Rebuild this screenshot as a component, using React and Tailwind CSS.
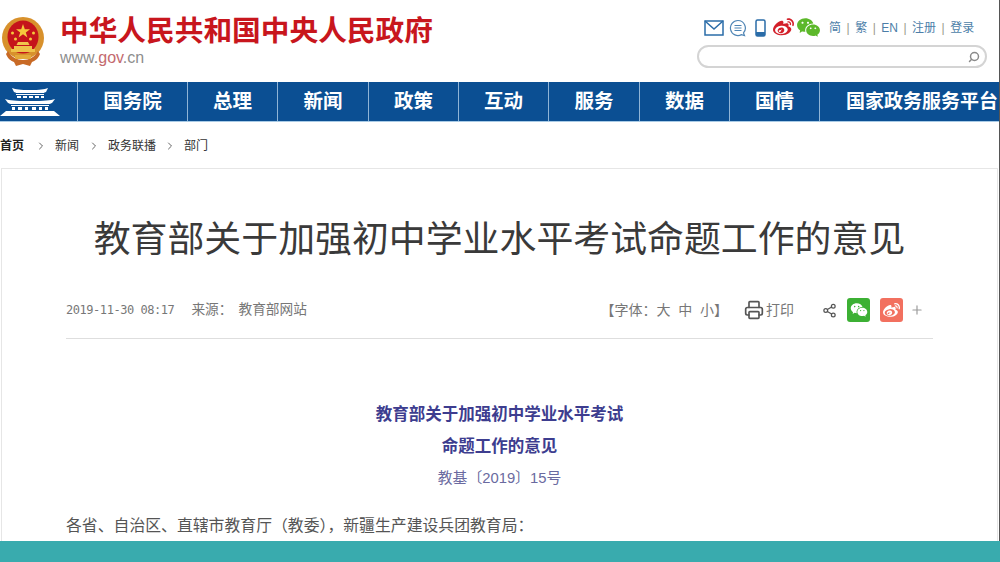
import React from "react";
import { ChevronRight, Plus, Printer, Share2, Search } from "lucide-react";
import { FaWeibo } from "react-icons/fa";
import { RiWechatFill } from "react-icons/ri";

const cjk = "font-['Liberation_Sans','Noto_Sans_CJK_SC',sans-serif]";

// 导航栏
const navItems = [
  { label: "国务院", w: "w-[110px]" },
  { label: "总理", w: "w-[90px]" },
  { label: "新闻", w: "w-[91px]" },
  { label: "政策", w: "w-[90px]" },
  { label: "互动", w: "w-[90px]" },
  { label: "服务", w: "w-[91px]" },
  { label: "数据", w: "w-[90px]" },
  { label: "国情", w: "w-[90px]" },
];

function Emblem() {
  return (
    <svg width="42" height="50" viewBox="0 0 42 50" className="shrink-0">
      <ellipse cx="21" cy="21" rx="21" ry="21" fill="#d8912c" />
      <path d="M6 34c3 6 9 9 15 9s12-3 15-9l2 3c-2 5-5 7-8 8l-2 4-7-2-7 2-2-4c-3-1-6-3-8-8z" fill="#c86a26" />
      <ellipse cx="21" cy="20" rx="15.500" ry="16.500" fill="#c5141b" />
      <polygon points="21,7 22.800,12.200 28,12.200 23.800,15.400 25.400,20.500 21,17.300 16.600,20.500 18.200,15.400 14,12.200 19.200,12.200" fill="#f5c93c" />
      <circle cx="10.500" cy="16" r="1.500" fill="#f5c93c" />
      <circle cx="13.500" cy="22" r="1.500" fill="#f5c93c" />
      <circle cx="28.500" cy="22" r="1.500" fill="#f5c93c" />
      <circle cx="31.500" cy="16" r="1.500" fill="#f5c93c" />
      <path d="M16 25h10l1.500 3H14.500z" fill="#f0c54c" />
      <path d="M12 29h18v3h3v3H9v-3h3z" fill="#efc24a" />
      <path d="M13 38h16v4H13z" fill="#e3a93a" />
    </svg>
  );
}

function Gate() {
  return (
    <svg width="60" height="28" viewBox="0 0 60 28" fill="#fff">
      <path d="M12 0c4 1.500 8 2 18 2s14-.500 18-2l-2 4c-2 1-3 1-4 1H18c-1 0-2 0-4-1z" />
      <path d="M16 6h28v1H16zM17 8h4v2h-4zM23 8h4v2h-4zM29 8h4v2h-4zM35 8h4v2h-4zM41 8h3v2h-3z" />
      <path d="M5 11c5 1.500 10 2 25 2s20-.500 25-2l-3 4c-1 .500-2 1-4 1H12c-2 0-3-.500-4-1z" />
      <path d="M11 17h38v1H11zM12 19h3v3h-3zM18 19h4v3h-4zM25 19h3v3h-3zM32 19h4v3h-4zM39 19h3v3h-3zM45 19h3v3h-3z" />
      <path d="M6 23h48l6 5H0z" />
    </svg>
  );
}

function Sep() {
  return <span className="mx-[5.500px] text-[#9a9a8c]">|</span>;
}

export default function App() {
  return (
    <div className={`h-[562px] w-[1000px] overflow-hidden bg-white flex flex-col ${cjk}`}>
      <div className="flex-1 min-h-0 flex flex-col border-r border-[#555]">
        {/* 顶部 */}
        <header className="h-[82px] flex justify-between">
          <div className="flex items-start pl-[2px] pt-[17px] gap-[16px]">
            <Emblem />
            <div className="-mt-[2px]">
              <h1 className="text-[28.700px] leading-[32px] font-bold text-[#c8161d] whitespace-nowrap">中华人民共和国中央人民政府</h1>
              <p className="text-[16px] leading-[18px] mt-[2px] text-[#8d8d8d]">
                www.<span className="text-[#c46a6e]">gov</span>.cn
              </p>
            </div>
          </div>
          <div className="w-[302px] pt-[17px]">
            <div className="flex items-center h-[21px] pl-[7px]">
              <svg width="20" height="16" viewBox="0 0 20 16" fill="none" stroke="#2a6ca8" strokeWidth="1.500">
                <rect x="1" y="1" width="18" height="14" />
                <path d="M1 1l9 8 9-8" />
              </svg>
              <svg width="18" height="18" viewBox="0 0 18 18" fill="none" stroke="#4f85b5" strokeWidth="1.200" className="ml-[5px]">
                <path d="M9 1.500a7.500 7.500 0 1 0 3.500 14.100l3 .9-1-2.600A7.500 7.500 0 0 0 9 1.500z" />
                <path d="M5.500 6.500h7M5.500 9h7M5.500 11.500h7" />
              </svg>
              <svg width="11" height="18" viewBox="0 0 11 18" className="ml-[8px]">
                <rect x="1" y="1" width="9" height="16" rx="1.500" fill="none" stroke="#2a6ca8" strokeWidth="1.500" />
                <rect x="1" y="13" width="9" height="4" fill="#2a6ca8" />
              </svg>
              <FaWeibo className="ml-[7px] text-[21px] text-[#d3202a]" />
              <RiWechatFill className="ml-[2px] text-[25px] text-[#5cb82a]" />
              <div className="ml-[8px] flex items-center text-[12px] text-[#4c7ea8] whitespace-nowrap">
                <span>简</span>
                <Sep />
                <span>繁</span>
                <Sep />
                <span>EN</span>
                <Sep />
                <span>注册</span>
                <Sep />
                <span>登录</span>
              </div>
            </div>
            <div className="mt-[7px] h-[23px] w-[290px] rounded-full border-2 border-[#d4d4d4] flex items-center justify-end pr-[5px]">
              <Search size={12} strokeWidth={3} className="text-[#8a8a8a] -scale-x-100" />
            </div>
          </div>
        </header>

        {/* 导航 */}
        <nav className="h-[40px] bg-[#0b4f93] border-b border-[#a9cbe6] flex text-white whitespace-nowrap">
          <div className="w-[78px] flex items-center border-r border-[#8fb4d6]">
            <Gate />
          </div>
          {navItems.map((item) => (
            <div key={item.label} className={`${item.w} pt-[1px] flex items-center justify-center border-r border-[#8fb4d6] text-[19.500px] font-bold`}>
              {item.label}
            </div>
          ))}
          <div className="flex-1 flex items-center pl-[26px] pt-[1px] text-[19px] font-bold overflow-hidden">国家政务服务平台</div>
        </nav>

        {/* 面包屑 */}
        <div className="h-[46px] pt-[1px] flex items-center text-[12px] text-[#333] whitespace-nowrap">
          <span className="font-bold text-[#222]">首页</span>
          <ChevronRight size={12} className="ml-[11px] mr-[8px] text-[#666]" />
          <span>新闻</span>
          <ChevronRight size={12} className="mx-[8.500px] text-[#666]" />
          <span>政务联播</span>
          <ChevronRight size={12} className="mx-[8px] text-[#666]" />
          <span>部门</span>
        </div>

        {/* 正文 */}
        <main className="flex-1 min-h-0 mx-[1px] border border-b-0 border-[#e6e6e6] px-[64px] overflow-hidden">
          <h2 className="mt-[46px] text-center text-[36.900px] leading-[50px] text-[#3a3a3a] whitespace-nowrap">
            教育部关于加强初中学业水平考试命题工作的意见
          </h2>
          <div className="mt-[33px] h-[41px] pb-[16px] border-b border-[#dedede] flex items-center justify-between text-[#777]">
            <div className="flex items-center text-[13.700px] whitespace-nowrap">
              <span className="font-['DejaVu_Sans_Mono',monospace] text-[12px] tracking-[-0.450px]">2019-11-30 08:17</span>
              <span className="ml-[17px]">来源：</span>
              <span className="ml-[6px]">教育部网站</span>
            </div>
            <div className="flex items-center text-[14px] whitespace-nowrap">
              <span>【字体：大&nbsp;&nbsp;中&nbsp;&nbsp;小】</span>
              <Printer size={20} className="ml-[16px] text-[#555]" />
              <span className="ml-[2px]">打印</span>
              <Share2 size={15} className="ml-[28px] text-[#555]" />
              <span className="ml-[10px] w-[23px] h-[24px] rounded-[3px] bg-[#3cb034] flex items-center justify-center">
                <RiWechatFill className="text-white text-[18px]" />
              </span>
              <span className="ml-[10px] w-[23px] h-[24px] rounded-[3px] bg-[#f2705f] flex items-center justify-center">
                <FaWeibo className="text-white text-[17px]" />
              </span>
              <Plus size={14} className="ml-[7px] mr-[9px] text-[#999]" />
            </div>
          </div>
          <div className="mt-[59px] text-center text-[#3d3d8f] text-[16.500px] font-bold leading-[32px]">
            <p>教育部关于加强初中学业水平考试</p>
            <p>命题工作的意见</p>
            <p className="font-normal text-[14.800px] text-[#6a6aa0]">教基〔2019〕15号</p>
          </div>
          <p className="mt-[20px] text-[15.850px] leading-[24px] text-[#555] whitespace-nowrap">
            各省、自治区、直辖市教育厅（教委），新疆生产建设兵团教育局：
          </p>
        </main>
      </div>

      {/* 底部色条 */}
      <div className="h-[21px] shrink-0 bg-[#39abae]" />
    </div>
  );
}
